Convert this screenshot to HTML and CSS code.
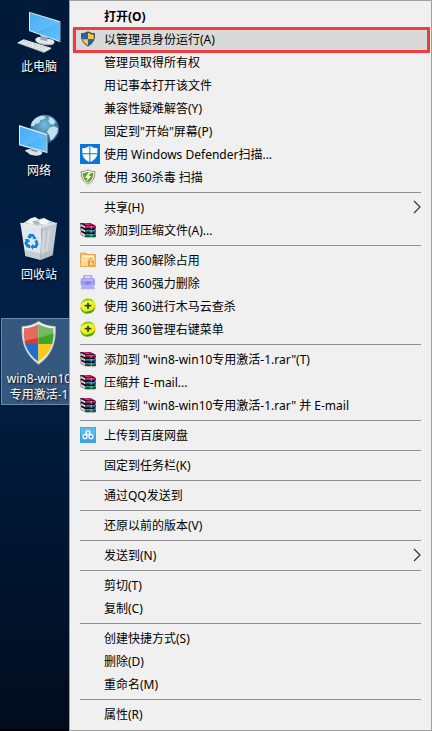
FILE: index.html
```html
<!DOCTYPE html>
<html lang="zh-CN">
<head>
    <meta charset="UTF-8">
    <meta name="viewport" content="width=device-width, initial-scale=1.0">
    <title>以管理员身份运行</title>
    <link rel="stylesheet" href="styles.css">
</head>
<body>
    <!-- Shared icons -->
    <svg class="sprite" aria-hidden="true">
        <defs>
            <linearGradient id="screen" x1="0" y1="0" x2="1" y2="1">
                <stop offset="0" stop-color="#2e9df0"></stop>
                <stop offset="1" stop-color="#62c4ff"></stop>
            </linearGradient>
            <radialGradient id="globe" cx="0.5" cy="0.35" r="0.65">
                <stop offset="0" stop-color="#78bfe0"></stop>
                <stop offset="1" stop-color="#1c567f"></stop>
            </radialGradient>
            <radialGradient id="ball" cx="0.4" cy="0.3" r="0.8">
                <stop offset="0" stop-color="#fcff60"></stop>
                <stop offset="0.6" stop-color="#f4e81c"></stop>
                <stop offset="1" stop-color="#d8b800"></stop>
            </radialGradient>
        </defs>
        <symbol id="icon-rar" viewBox="30 19 48 48">
            <path d="M31 22h29l17 8v9l-2 2 2 2v8l-2 1 2 2v11H47l-15-8v-9l2-2-3-3v-9l2-2-2-3z" fill="#150c18"></path>
            <path d="M34 22h25l16 7H48z" fill="#b01264"></path>
            <path d="M40 23h8l14 6h-8z" fill="#e83c8c"></path>
            <path d="M48 31h29v7H48z" fill="#9a1050"></path>
            <path d="M48 32h27v2H48z" fill="#e04890"></path>
            <path d="M48 43h29v7H48z" fill="#1454a8"></path>
            <path d="M48 43h27v2H48z" fill="#38a8e8"></path>
            <path d="M48 55h29v8H48z" fill="#087058"></path>
            <path d="M48 56h27v2H48z" fill="#28c090"></path>
            <path d="M32 25l14 7v6l-14-7zM32 37l14 7v6l-14-7zM32 49l14 7v7l-14-7z" fill="#ece8e4"></path>
            <path d="M32 28l14 7M32 40l14 7M32 53l14 7" stroke="#8a8488" fill="none"></path>
            <path d="M62 31h3v8h-3zM62 43h3v8h-3zM62 55h3v8h-3z" fill="#d8c048"></path>
        </symbol>
        <symbol id="icon-plus" viewBox="30 160 48 48">
            <circle cx="54" cy="184" r="23" fill="url(#ball)"></circle>
            <path d="M32 177C38 160 62 155 73 171C60 164 45 167 32 177z" fill="#7ed321"></path>
            <path d="M76 188C73 206 49 213 35 199C50 204 66 200 76 188z" fill="#35a810"></path>
            <path d="M31 186C31 198 40 207 54 207C44 203 36 196 31 186z" fill="#58b818"></path>
            <path d="M54 174v19M44 183h20" stroke="#07540c" stroke-width="5"></path>
        </symbol>
        <symbol id="icon-arrow" viewBox="0 0 8 14">
            <path d="M1 1l6 6-6 6" fill="none" stroke="#333" stroke-width="1.2"></path>
        </symbol>
    </svg>

    <main class="desktop">
        <div class="shortcuts">
            <button class="shortcut">
                <svg class="shortcut-icon" viewBox="45 24 144 144">
                    <path d="M106 122q0-8 12-9l34 7q12 3 11 9-1 7-18 7-33-2-39-14z" fill="#aab3ba"></path>
                    <path d="M106 120q0-8 12-9l34 7q12 3 11 8-1 6-18 6-33-2-39-12z" fill="#e4e9ed"></path>
                    <path d="M121 102l21 7v15l-21-5z" fill="#99a4ae"></path>
                    <path d="M87 35l94 29v63L87 93z" fill="#dfe9f0"></path>
                    <path d="M90 39l87 27v56L90 91z" fill="url(#screen)"></path>
                    <path d="M90 39l87 27v4L108 97l-18-6z" fill="#8ad4ff" opacity="0.3"></path>
                    <path d="M178 65l3 1v61l-3-1z" fill="#74818c"></path>
                    <path d="M52 130l19-10 84 26-23 13z" fill="#8e989f"></path>
                    <path d="M52 128l19-10 84 26-23 12z" fill="#f0f3f5"></path>
                    <path d="M59 128l72 24M66 124l72 24M72 121l74 24" stroke="#9ca7ae" stroke-width="2" stroke-dasharray="5 2" fill="none"></path>
                    <path d="M76 120l-13 10M94 126l-14 9M112 132l-14 9M130 138l-15 9" stroke="#bcc5ca" stroke-width="1"></path>
                </svg>
                <span class="shortcut-label">此电脑</span>
            </button>
            <button class="shortcut">
                <svg class="shortcut-icon" viewBox="45 36 144 144">
                    <circle cx="134" cy="87" r="43" fill="url(#globe)"></circle>
                    <path d="M96 66q10-15 30-19l12 4-7 7-10 2-4 10-11 1-4 8-10-2zM144 50l13 4 10 12-7 8-10-3-5-9 3-7zM148 83l14-4 12 5-2 15-12 17-9 6-3-16-7-9z" fill="#c4e0ea"></path>
                    <path d="M75 153q1-5 16-6l27 5q10 3 9 8-3 7-19 7-20-1-22-7z" fill="#dce2e6"></path>
                    <path d="M94 140l17 4v13l-17-5z" fill="#87939c"></path>
                    <path d="M57 75l86 28v57l-86-24z" fill="#e5edf2"></path>
                    <path d="M60 80l79 26v49l-79-22z" fill="url(#screen)"></path>
                    <path d="M60 80l79 26v3l-65 28-14-4z" fill="#8ad4ff" opacity="0.25"></path>
                    <path d="M140 103l4 1v56l-4-1z" fill="#71808b"></path>
                </svg>
                <span class="shortcut-label">网络</span>
            </button>
            <button class="shortcut">
                <svg class="shortcut-icon" viewBox="45 48 144 144">
                    <path d="M66 71l24-15 15-5 12 7 14-4 14 7 22 7-9 14-80 8z" fill="#cfd7dd"></path>
                    <path d="M79 67l14-12 14-3 6 11-16 9zM117 63l16-8 14 7-7 12-19-3z" fill="#f5f7f8"></path>
                    <path d="M96 65l12-4 12 8-9 8z" fill="#aeb9c2"></path>
                    <path d="M61 69l63 12-2 99-46-12z" fill="#e2e7eb"></path>
                    <path d="M124 81l47-12-13 97-36 14z" fill="#c2cad1"></path>
                    <path d="M61 69l63 12 47-12" fill="none" stroke="#f8fafb" stroke-width="2"></path>
                    <path d="M77 150l46 10 38-11-3 17-36 14-46-12z" fill="#a9b1b9" opacity="0.5"></path>
                    <path d="M132 93l-3 68M148 89l-8 66" stroke="#e6ebee" stroke-width="4" opacity="0.6"></path>
                    <path d="M82 112l6-11 12 1 7 10 3 5-12 1 2-5-4-3-6 6z" fill="#1583d7"></path>
                    <path d="M103 124l8-5 5 13-6 12h-11v6l-7-10 7-9v5h6l2-5z" fill="#1583d7"></path>
                    <path d="M73 118l13-1 5 10-5-2-3 6 8 5v9l-11-3-7-12 4-9z" fill="#1583d7"></path>
                </svg>
                <span class="shortcut-label">回收站</span>
            </button>
            <button class="shortcut selected">
                <svg class="shortcut-icon" viewBox="45 45 144 144">
                    <path d="M116 48q20 15 51 16 5 77-51 115Q60 141 65 64q31-1 51-16z" fill="#c7ced4"></path>
                    <path d="M116 52q20 14 47 15 4 72-47 107Q65 139 69 67q27-1 47-15z" fill="#f4f6f7"></path>
                    <path d="M115 57v60H75q-6-23-3-47 24-1 43-13z" fill="#d93a31"></path>
                    <path d="M115 57q20 12 45 13 3 24-3 47h-42z" fill="#43a42c"></path>
                    <path d="M75 117h40v53q-29-20-40-53z" fill="#236ecb"></path>
                    <path d="M115 117h42q-11 33-42 53z" fill="#f9c91f"></path>
                    <path d="M70 68q27-1 46-15 19 14 46 15l1 16q-39 14-93 25z" fill="#fff" opacity="0.25"></path>
                </svg>
                <span class="shortcut-label">win8-win10专用激活-1</span>
            </button>
        </div>

        <nav class="context-menu">
            <ul class="menu-group">
                <li><button class="menu-item default">打开(O)</button></li>
                <li>
                    <button class="menu-item highlighted">
                        <svg class="menu-icon" viewBox="36 92 48 48">
                            <path d="M60 93q9 6 21 6 3 28-21 40-24-12-21-40 12 0 21-6z" fill="#4c5358"></path>
                            <path d="M60 97v20H43q-1-7 0-14 10 0 17-6z" fill="#1769b5"></path>
                            <path d="M60 97q8 6 17 6 1 7 0 14H60z" fill="#fcc62d"></path>
                            <path d="M43 117h17v18q-14-7-17-18z" fill="#fcc62d"></path>
                            <path d="M60 117h17q-3 11-17 18z" fill="#1769b5"></path>
                        </svg>
                        以管理员身份运行(A)
                    </button>
                </li>
                <li><button class="menu-item">管理员取得所有权</button></li>
                <li><button class="menu-item">用记事本打开该文件</button></li>
                <li><button class="menu-item">兼容性疑难解答(Y)</button></li>
                <li><button class="menu-item">固定到"开始"屏幕(P)</button></li>
                <li>
                    <button class="menu-item">
                        <svg class="menu-icon large" viewBox="30 12 60 60">
                            <path d="M30 12h60v60H30z" fill="#0877d6"></path>
                            <path d="M58 18v22H37V25q13 0 21-7zM61 18q9 7 21 7v15H61zM37 43h21v23Q40 58 37 43zM61 43h21q-3 15-21 23z" fill="#fff"></path>
                        </svg>
                        使用 Windows Defender扫描...
                    </button>
                </li>
                <li>
                    <button class="menu-item">
                        <svg class="menu-icon" viewBox="30 86 48 48">
                            <path d="M54 87q9 6 22 6 2 29-22 40-24-11-22-40 13 0 22-6z" fill="#8c9688"></path>
                            <path d="M54 90q9 5 19 6 1 25-19 34-20-9-19-34 10-1 19-6z" fill="#f2f6ea"></path>
                            <path d="M54 94q7 4 16 5 0 20-16 28-16-8-16-28 9-1 16-5z" fill="#63a51b"></path>
                            <path d="M57 95L45 112h8l-4 12 15-17h-8l6-9z" fill="#fff"></path>
                        </svg>
                        使用 360杀毒 扫描
                    </button>
                </li>
            </ul>
            <ul class="menu-group">
                <li>
                    <button class="menu-item">
                        共享(H)
                        <svg class="menu-arrow"><use href="#icon-arrow"></use></svg>
                    </button>
                </li>
                <li>
                    <button class="menu-item">
                        <svg class="menu-icon"><use href="#icon-rar"></use></svg>
                        添加到压缩文件(A)...
                    </button>
                </li>
            </ul>
            <ul class="menu-group">
                <li>
                    <button class="menu-item">
                        <svg class="menu-icon" viewBox="30 22 48 48">
                            <path d="M31 24h17l4 5h25v38H31z" fill="#d48a2c"></path>
                            <path d="M33 26h14l4 5h24v34H33z" fill="#f7b950"></path>
                            <path d="M36 32h36v8H36z" fill="#fff2c8"></path>
                            <path d="M33 38h42v27H33z" fill="#fad885"></path>
                            <path d="M38 45h13M38 51h10" stroke="#fff8dc" stroke-width="3"></path>
                            <path d="M54 48h18v16H54z" fill="#f39426"></path>
                            <path d="M57 48v-4q5-6 10 0" fill="none" stroke="#ee912c" stroke-width="3"></path>
                            <path d="M67 52h-6v8h6v-4h-6" fill="none" stroke="#fff" stroke-width="2"></path>
                        </svg>
                        使用 360解除占用
                    </button>
                </li>
                <li>
                    <button class="menu-item">
                        <svg class="menu-icon" viewBox="30 91 48 48">
                            <path d="M41 91h25l3 12H38z" fill="#aaa8f1"></path>
                            <path d="M45 95h17v9H45z" fill="#deddff"></path>
                            <rect x="32" y="101" width="43" height="23" rx="5" fill="#9a98f0"></rect>
                            <path d="M35 104h37v5H35z" fill="#b8b6fb"></path>
                            <path d="M37 117h33l5 17H32z" fill="#b0aef5"></path>
                            <path d="M46 111h15v9H46z" fill="#8582e2"></path>
                        </svg>
                        使用 360强力删除
                    </button>
                </li>
                <li>
                    <button class="menu-item">
                        <svg class="menu-icon"><use href="#icon-plus"></use></svg>
                        使用 360进行木马云查杀
                    </button>
                </li>
                <li>
                    <button class="menu-item">
                        <svg class="menu-icon"><use href="#icon-plus"></use></svg>
                        使用 360管理右键菜单
                    </button>
                </li>
            </ul>
            <ul class="menu-group">
                <li>
                    <button class="menu-item">
                        <svg class="menu-icon"><use href="#icon-rar"></use></svg>
                        添加到 "win8-win10专用激活-1.rar"(T)
                    </button>
                </li>
                <li>
                    <button class="menu-item">
                        <svg class="menu-icon"><use href="#icon-rar"></use></svg>
                        压缩并 E-mail...
                    </button>
                </li>
                <li>
                    <button class="menu-item">
                        <svg class="menu-icon"><use href="#icon-rar"></use></svg>
                        压缩到 "win8-win10专用激活-1.rar" 并 E-mail
                    </button>
                </li>
            </ul>
            <ul class="menu-group">
                <li>
                    <button class="menu-item">
                        <svg class="menu-icon" viewBox="30 246 48 48">
                            <path d="M30 246h48v48H30z" fill="#3ba5df"></path>
                            <path d="M32 248h44v22H32z" fill="#5ab9ec"></path>
                            <g fill="none" stroke="#fff" stroke-width="4">
                                <circle cx="54" cy="263" r="6"></circle>
                                <circle cx="45" cy="275" r="6"></circle>
                                <circle cx="63" cy="275" r="6"></circle>
                            </g>
                        </svg>
                        上传到百度网盘
                    </button>
                </li>
            </ul>
            <ul class="menu-group">
                <li><button class="menu-item">固定到任务栏(K)</button></li>
            </ul>
            <ul class="menu-group">
                <li><button class="menu-item">通过QQ发送到</button></li>
            </ul>
            <ul class="menu-group">
                <li><button class="menu-item">还原以前的版本(V)</button></li>
            </ul>
            <ul class="menu-group">
                <li>
                    <button class="menu-item">
                        发送到(N)
                        <svg class="menu-arrow"><use href="#icon-arrow"></use></svg>
                    </button>
                </li>
            </ul>
            <ul class="menu-group">
                <li><button class="menu-item">剪切(T)</button></li>
                <li><button class="menu-item">复制(C)</button></li>
            </ul>
            <ul class="menu-group">
                <li><button class="menu-item">创建快捷方式(S)</button></li>
                <li><button class="menu-item">删除(D)</button></li>
                <li><button class="menu-item">重命名(M)</button></li>
            </ul>
            <ul class="menu-group">
                <li><button class="menu-item">属性(R)</button></li>
            </ul>
        </nav>
    </main>
</body>
</html>
```
FILE: styles.css
```css
* {
    margin: 0;
    padding: 0;
    box-sizing: border-box;
}

body {
    font-family: "Noto Sans", "Noto Sans CJK SC", sans-serif;
    font-size: 12px;
    color: #000;
}

button {
    font: inherit;
    color: inherit;
    background: none;
    border: none;
}

.sprite {
    position: absolute;
    width: 0;
    height: 0;
}

.desktop {
    display: flex;
    min-height: 100vh;
    background: linear-gradient(180deg, #021a39 0%, #012046 45%, #010c1e 100%);
}

/* Desktop shortcuts, partly covered by the menu */
.shortcuts {
    flex: 0 0 69px;
    display: flex;
    flex-direction: column;
    gap: 17px;
    padding: 6px 0 0 1px;
    overflow: hidden;
    border-bottom: 2px solid #000;
}

.shortcut {
    display: flex;
    flex-direction: column;
    align-items: center;
    gap: 3px;
    width: 76px;
    min-height: 87px;
    padding: 1px;
    border: 1px solid transparent;
    color: #fff;
}

.shortcut.selected {
    background: #35587f;
    border-color: #6d88a6;
}

.shortcut-icon {
    width: 48px;
    height: 48px;
}

.shortcut-label {
    line-height: 16px;
    text-shadow: 1px 1px 2px #000;
}

/* Context menu */
.context-menu {
    flex: 1;
    min-width: 0;
    padding: 4px 2px;
    background: #f0f0f0;
    border: 1px solid #a0a0a0;
}

.menu-group {
    list-style: none;
}

.menu-group + .menu-group::before {
    content: "";
    display: block;
    height: 1px;
    margin: 3px 8px;
    background: #919191;
}

.menu-item {
    position: relative;
    display: flex;
    align-items: center;
    width: 100%;
    height: 23px;
    padding: 0 8px 2px 32px;
    text-align: left;
    white-space: nowrap;
}

.menu-item:hover,
.menu-item.highlighted {
    background: #d9d9d9;
}

.menu-item.default {
    font-weight: 700;
}

.menu-item.highlighted::after {
    content: "";
    position: absolute;
    inset: -1px -1px -2px 1px;
    border: 3px solid #ee3c40;
}

.menu-icon {
    flex: none;
    width: 16px;
    height: 16px;
    margin: 0 8px 0 -24px;
}

.menu-icon.large {
    width: 20px;
    height: 20px;
    margin-right: 4px;
}

.menu-arrow {
    width: 8px;
    height: 14px;
    margin-left: auto;
}
```
